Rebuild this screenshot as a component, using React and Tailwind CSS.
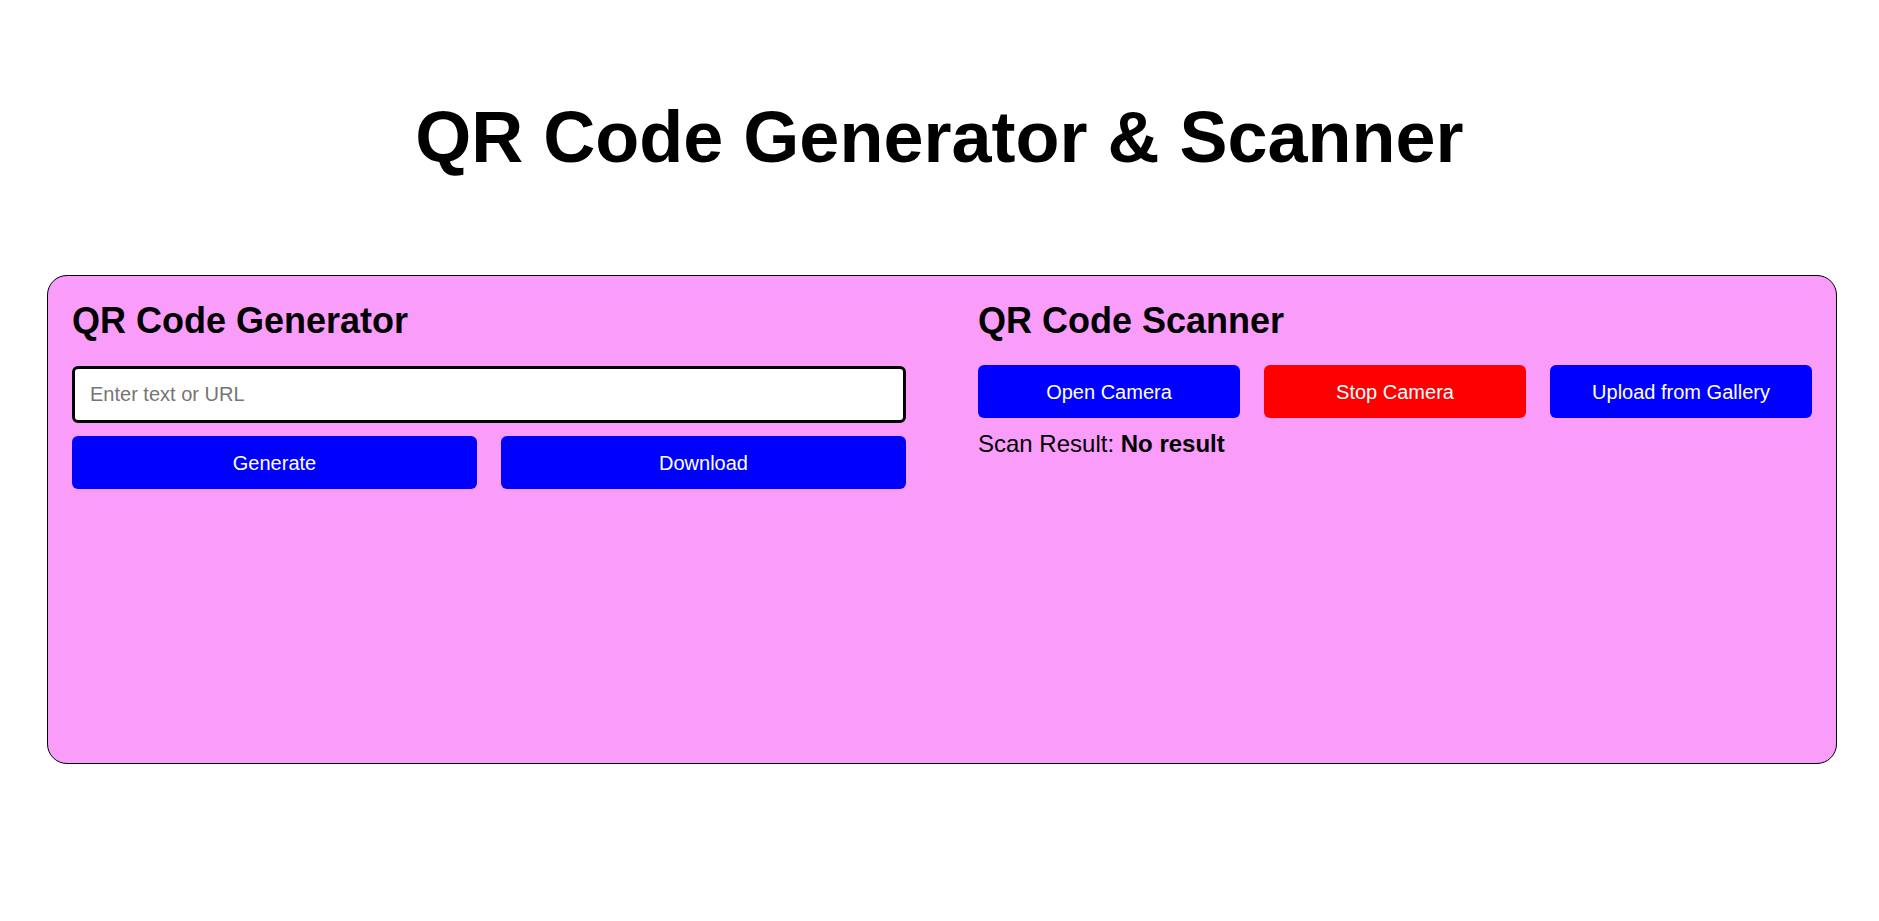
import { useState } from "react";

const App = () => {
  const [text, setText] = useState("");
  const [result] = useState("No result");

  return (
    <main
      className="w-full min-h-[921px] bg-white text-black flex flex-col"
      style={{ fontFamily: '"Liberation Sans", Arial, sans-serif' }}
    >
      {/* Title */}
      <h1 className="mt-[96px] text-center text-[72px] leading-[1.15] font-bold">
        QR Code Generator &amp; Scanner
      </h1>

      {/* Panel */}
      <section className="mt-[96px] ml-[47px] w-[1790px] h-[489px] bg-[#f99cfa] border border-black rounded-[20px] p-6 grid grid-cols-2 gap-x-[72px] items-start">
        {/* Generator */}
        <div className="flex flex-col">
          <h2 className="text-[36px] leading-[1.15] font-bold mb-[25px]">
            QR Code Generator
          </h2>
          <input
            type="text"
            value={text}
            onChange={(e) => setText(e.target.value)}
            placeholder="Enter text or URL"
            className="w-full h-[57px] bg-white border-[3px] border-black rounded-md px-[15px] text-[20px] outline-none placeholder:text-[#757575]"
          />
          <div className="grid grid-cols-2 gap-6 mt-[13px]">
            <button className="h-[53px] bg-[#0000ff] text-white text-[20px] rounded-md">
              Generate
            </button>
            <button className="h-[53px] bg-[#0000ff] text-white text-[20px] rounded-md">
              Download
            </button>
          </div>
        </div>

        {/* Scanner */}
        <div className="flex flex-col">
          <h2 className="text-[36px] leading-[1.15] font-bold mb-[24px]">
            QR Code Scanner
          </h2>
          <div className="grid grid-cols-3 gap-6">
            <button className="h-[53px] bg-[#0000ff] text-white text-[20px] rounded-md">
              Open Camera
            </button>
            <button className="h-[53px] bg-[#ff0000] text-white text-[20px] rounded-md">
              Stop Camera
            </button>
            <button className="h-[53px] bg-[#0000ff] text-white text-[20px] rounded-md">
              Upload from Gallery
            </button>
          </div>
          <p className="mt-3 text-[24px] leading-[1.15]">
            Scan Result: <b>{result}</b>
          </p>
        </div>
      </section>
    </main>
  );
};

export default App;
